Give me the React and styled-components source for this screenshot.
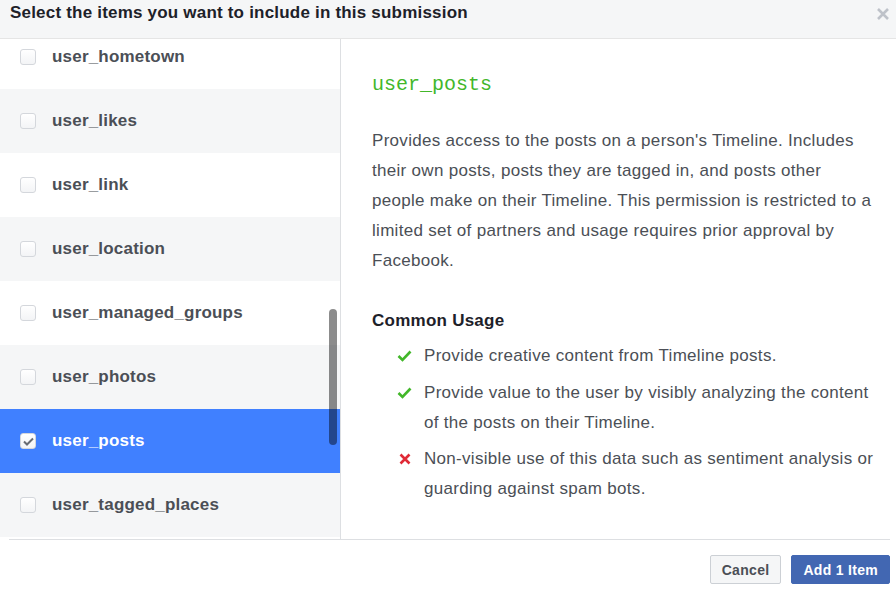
import React from 'react';
import styled, { createGlobalStyle } from 'styled-components';

const GlobalStyle = createGlobalStyle`
  html, body {
    margin: 0;
    padding: 0;
    background: #fff;
  }
  body {
    font-family: 'Liberation Sans', Arial, sans-serif;
  }
`;

const Modal = styled.div`
  width: 896px;
  height: 600px;
  display: flex;
  flex-direction: column;
  background: #fff;
  overflow: hidden;
`;

const Header = styled.div`
  height: 39px;
  flex: none;
  background: #f5f6f7;
  border-bottom: 1px solid #e5e5e5;
  display: flex;
  justify-content: space-between;
  padding: 3px 6px 0 10px;
  box-sizing: border-box;
`;

const Title = styled.h1`
  margin: 0;
  font-size: 17px;
  letter-spacing: 0.2px;
  line-height: 20px;
  font-weight: bold;
  color: #1d2129;
`;

const Close = styled.button`
  border: 0;
  background: none;
  padding: 0;
  width: 14px;
  height: 14px;
  margin-top: 4px;
  cursor: pointer;
`;

const Body = styled.div`
  height: 500px;
  flex: none;
  display: flex;
`;

const ListPane = styled.div`
  position: relative;
  width: 340px;
  flex: none;
  height: 498px;
  overflow: hidden;
  border-right: 1px solid #dddfe2;
  box-sizing: content-box;
  padding-bottom: 2px;
`;

const List = styled.ul`
  list-style: none;
  margin: -14px 0 0;
  padding: 0;
`;

const Row = styled.li`
  height: 64px;
  display: flex;
  align-items: center;
  padding-left: 20px;
  background: ${p => (p.selected ? '#4080ff' : p.shaded ? '#f5f6f7' : '#fff')};
  color: ${p => (p.selected ? '#fff' : '#4b4f56')};
  font-size: 17px;
  letter-spacing: 0.2px;
  font-weight: bold;
`;

const Box = styled.span`
  width: 14px;
  height: 14px;
  flex: none;
  border: 1px solid #d4d7dc;
  border-radius: 3px;
  background: linear-gradient(#fff, #f3f4f6);
  margin-right: 16px;
  display: flex;
  align-items: center;
  justify-content: center;
`;

const Thumb = styled.div`
  position: absolute;
  left: 329px;
  top: 270px;
  width: 8px;
  height: 136px;
  border-radius: 4px;
  background: rgba(0, 0, 0, 0.45);
`;

const Detail = styled.div`
  flex: 1;
  padding: 0 22px 0 31px;
  color: #4b4f56;
`;

const Code = styled.h2`
  margin: 34px 0 0;
  font-family: 'Liberation Mono', 'Courier New', monospace;
  font-weight: normal;
  font-size: 20px;
  line-height: 24px;
  color: #42b72a;
`;

const Text = styled.p`
  margin: 29px 0 0;
  font-size: 17px;
  letter-spacing: 0.3px;
  line-height: 30px;
`;

const SubHead = styled.h3`
  margin: 35px 0 0;
  font-size: 17px;
  letter-spacing: 0.25px;
  line-height: 20px;
  font-weight: bold;
  color: #1d2129;
`;

const Uses = styled.ul`
  list-style: none;
  margin: 10px 0 0;
  padding: 0 0 0 24px;
  display: flex;
  flex-direction: column;
  gap: 6.5px;
`;

const Use = styled.li`
  display: flex;
  font-size: 17px;
  letter-spacing: 0.3px;
  line-height: 30px;
`;

const UseIcon = styled.span`
  width: 28px;
  flex: none;
  display: flex;
  align-items: flex-start;
  padding-top: 9px;
  padding-left: ${p => (p.ok ? '1px' : '3px')};
  box-sizing: border-box;
`;

const Footer = styled.div`
  flex: 1;
  margin: 0 6px 0 9px;
  border-top: 1px solid #dddfe2;
  display: flex;
  justify-content: flex-end;
  align-items: flex-start;
  gap: 10px;
  padding-top: 15px;
`;

const Button = styled.button`
  height: 29px;
  padding: 0 11px;
  border-radius: 2px;
  font-family: 'Liberation Sans', Arial, sans-serif;
  font-size: 14px;
  letter-spacing: 0.3px;
  font-weight: bold;
  border: 1px solid ${p => (p.primary ? '#4267b2' : '#ccd0d5')};
  background: ${p => (p.primary ? '#4267b2' : '#f5f6f7')};
  color: ${p => (p.primary ? '#fff' : '#4b4f56')};
  cursor: pointer;
`;

const items = [
  'user_hometown',
  'user_likes',
  'user_link',
  'user_location',
  'user_managed_groups',
  'user_photos',
  'user_posts',
  'user_tagged_places',
];

const usages = [
  { ok: true, text: 'Provide creative content from Timeline posts.' },
  { ok: true, text: 'Provide value to the user by visibly analyzing the content of the posts on their Timeline.' },
  { ok: false, text: 'Non-visible use of this data such as sentiment analysis or guarding against spam bots.' },
];

function Check() {
  return (
    <svg width="11" height="9" viewBox="0 0 11 9">
      <path d="M1 4.5 L4 7.5 L10 1.5" fill="none" stroke="#686c72" strokeWidth="2" />
    </svg>
  );
}

function UsageMark({ ok }) {
  if (ok) {
    return (
      <svg width="15" height="12" viewBox="0 0 15 12">
        <path d="M1.5 6 L5.5 10 L13.5 1.5" fill="none" stroke="#42b72a" strokeWidth="2.6" />
      </svg>
    );
  }
  return (
    <svg width="12" height="12" viewBox="0 0 12 12">
      <path d="M1.5 1.5 L10.5 10.5 M10.5 1.5 L1.5 10.5" fill="none" stroke="#e02a36" strokeWidth="2.6" />
    </svg>
  );
}

export default function App() {
  const selected = 'user_posts';
  return (
    <Modal>
      <GlobalStyle />
      <Header>
        <Title>Select the items you want to include in this submission</Title>
        <Close aria-label="Close">
          <svg width="14" height="14" viewBox="0 0 14 14">
            <path d="M2 2 L12 12 M12 2 L2 12" stroke="#bec2c9" strokeWidth="2.6" />
          </svg>
        </Close>
      </Header>
      <Body>
        <ListPane>
          <List>
            {items.map((name, i) => (
              <Row key={name} shaded={i % 2 === 1} selected={name === selected}>
                <Box>{name === selected && <Check />}</Box>
                {name}
              </Row>
            ))}
          </List>
          <Thumb />
        </ListPane>
        <Detail>
          <Code>user_posts</Code>
          <Text>
            Provides access to the posts on a person's Timeline. Includes their own posts, posts they
            are tagged in, and posts other people make on their Timeline. This permission is
            restricted to a limited set of partners and usage requires prior approval by Facebook.
          </Text>
          <SubHead>Common Usage</SubHead>
          <Uses>
            {usages.map(u => (
              <Use key={u.text}>
                <UseIcon ok={u.ok}>
                  <UsageMark ok={u.ok} />
                </UseIcon>
                <span>{u.text}</span>
              </Use>
            ))}
          </Uses>
        </Detail>
      </Body>
      <Footer>
        <Button>Cancel</Button>
        <Button primary>Add 1 Item</Button>
      </Footer>
    </Modal>
  );
}
